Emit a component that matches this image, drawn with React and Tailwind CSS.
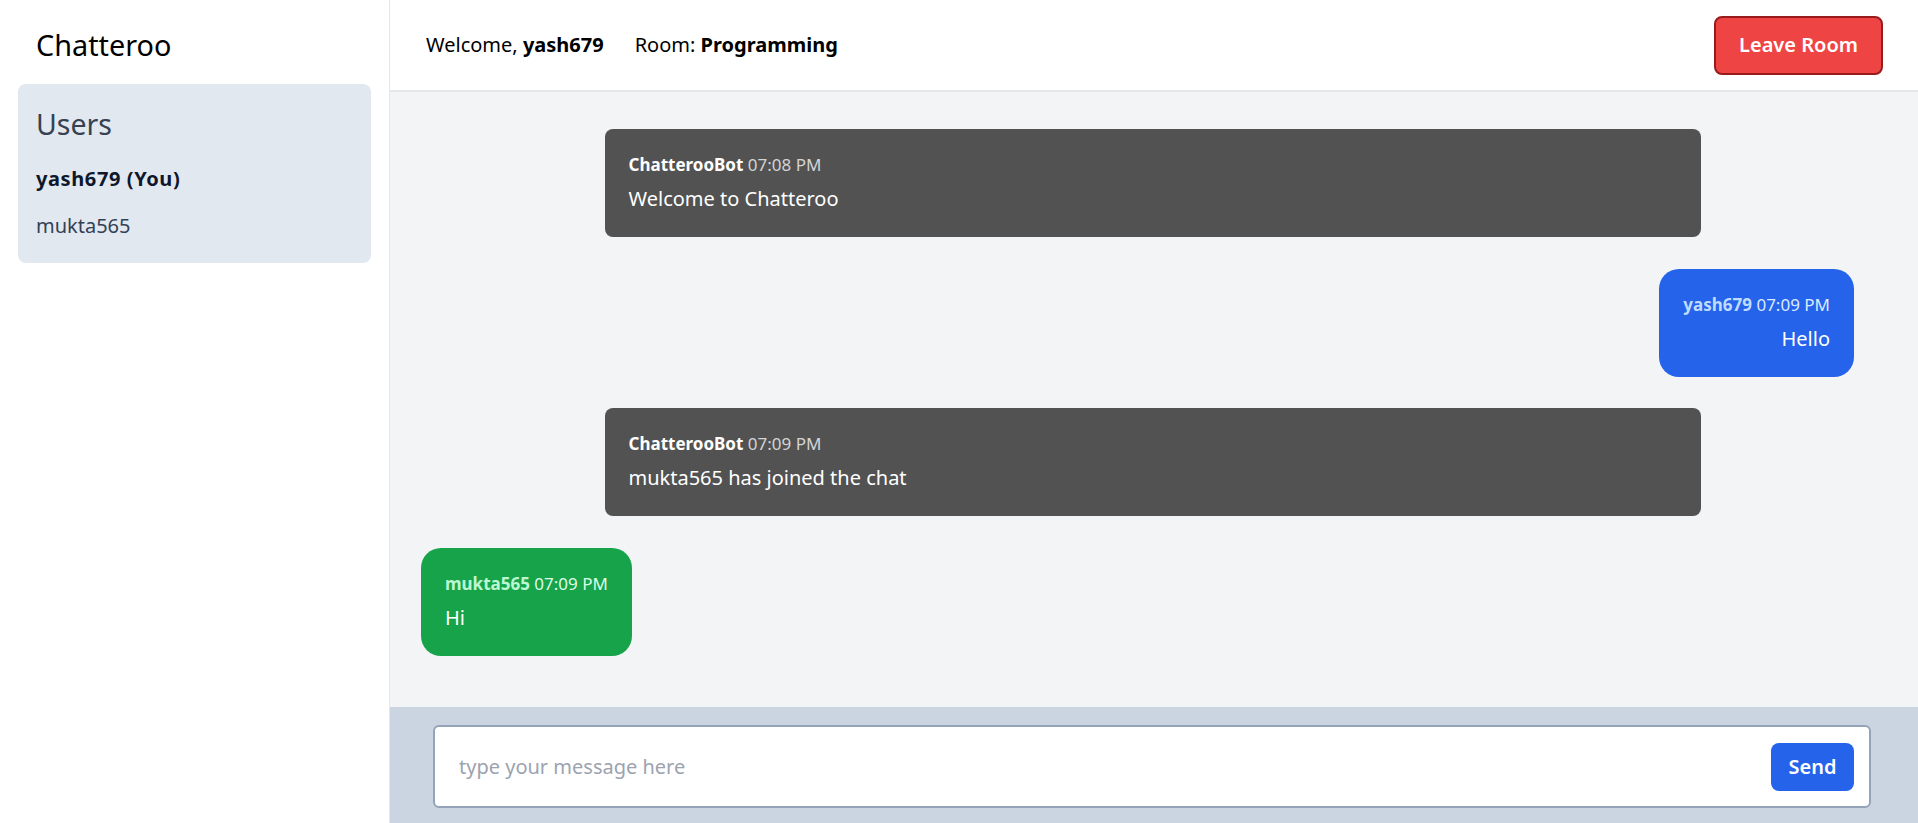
export default function App() {
  return (
    <div className="flex h-[823px] w-full overflow-hidden bg-white font-['Noto_Sans',sans-serif] text-black">
      {/* Sidebar */}
      <aside className="flex w-[390px] shrink-0 flex-col border-r border-gray-200 px-[18px] pt-[25px]">
        <h1 className="pl-[18px] text-[28.8px] leading-[40px] font-normal text-black">Chatteroo</h1>
        <div className="mt-[19px] rounded-lg bg-[#e2e8f0] px-[18px] pt-[22px] pb-[23px]">
          <h2 className="text-[28.5px] leading-[36px] font-normal text-[#374151]">Users</h2>
          <div className="mt-[23px] text-[20px] leading-[28px] font-bold tracking-[0.03em] text-[#0f172a]">yash679 (You)</div>
          <div className="mt-[19px] text-[20px] leading-[28px] text-[#334155]">mukta565</div>
        </div>
      </aside>

      {/* Main */}
      <main className="flex min-w-0 flex-1 flex-col">
        <header className="flex h-[92px] shrink-0 items-center justify-between border-b-2 border-gray-200 pl-9 pr-[35px]">
          <div className="flex items-center gap-[31px] text-[20px] leading-[28px]">
            <span>
              Welcome, <span className="font-bold">yash679</span>
            </span>
            <span>
              Room: <span className="font-bold">Programming</span>
            </span>
          </div>
          <button className="flex h-[59px] w-[169px] items-center justify-center rounded-lg border-2 border-[#991b1b] bg-[#ef4444] text-[20px] leading-[28px] font-semibold text-white">
            Leave Room
          </button>
        </header>

        <section className="flex flex-1 flex-col gap-[31.5px] bg-[#f3f4f6] pl-[31px] pr-[34px] pt-[37px]">
          <div className="mx-auto w-[1096px] rounded-lg bg-[#525252] px-6 pt-6 pb-6">
            <div className="text-[17px] leading-[24px]">
              <span className="font-bold text-white">ChatterooBot</span>{" "}
              <span className="text-[#d4d4d4]">07:08 PM</span>
            </div>
            <div className="mt-2 text-[20px] leading-[28px] text-white">Welcome to Chatteroo</div>
          </div>

          <div className="mr-[30px] self-end rounded-[20px] bg-[#2563eb] px-6 pt-6 pb-6 text-right">
            <div className="text-[17px] leading-[24px]">
              <span className="font-bold text-[#bfdbfe]">yash679</span>{" "}
              <span className="text-[#dbeafe]">07:09 PM</span>
            </div>
            <div className="mt-2 text-[20px] leading-[28px] text-white">Hello</div>
          </div>

          <div className="mx-auto w-[1096px] rounded-lg bg-[#525252] px-6 pt-6 pb-6">
            <div className="text-[17px] leading-[24px]">
              <span className="font-bold text-white">ChatterooBot</span>{" "}
              <span className="text-[#d4d4d4]">07:09 PM</span>
            </div>
            <div className="mt-2 text-[20px] leading-[28px] text-white">mukta565 has joined the chat</div>
          </div>

          <div className="self-start rounded-[20px] bg-[#16a34a] px-6 pt-6 pb-6">
            <div className="text-[17px] leading-[24px]">
              <span className="font-bold text-[#bbf7d0]">mukta565</span>{" "}
              <span className="text-[#dcfce7]">07:09 PM</span>
            </div>
            <div className="mt-2 text-[20px] leading-[28px] text-white">Hi</div>
          </div>
        </section>

        <footer className="h-[116px] shrink-0 bg-[#cbd5e1] pt-[18px] pl-[43px] pr-[47px]">
          <div className="flex h-[83px] items-center rounded-md border-2 border-[#94a3b8] bg-white pl-6 pr-[15px]">
            <input
              className="min-w-0 flex-1 bg-transparent text-[20px] leading-[28px] text-black outline-none placeholder:text-[#9ca3af]"
              placeholder="type your message here"
            />
            <button className="flex h-[48px] w-[83px] items-center justify-center rounded-lg bg-[#2563eb] text-[20px] leading-[28px] font-semibold text-white">
              Send
            </button>
          </div>
        </footer>
      </main>
    </div>
  );
}
